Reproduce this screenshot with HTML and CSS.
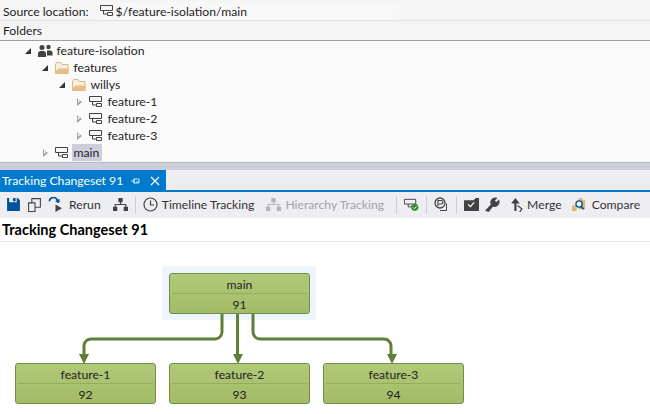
FILE: index.html
```html
<!DOCTYPE html>
<html lang="en">
<head>
    <meta charset="UTF-8">
    <title>Tracking Changeset 91</title>
    <link rel="stylesheet" href="styles.css">
</head>
<body>
    <svg class="defs" width="0" height="0">
        <symbol id="branch" viewBox="0 0 16 14">
            <path d="M1.500 1.500h12v5h-12z M4.500 6.500v3.500h4 M8.500 8.500h5v3h-5z" fill="#f6f6f6" stroke="#424242"/>
        </symbol>
        <symbol id="folder" viewBox="0 0 16 14">
            <path d="M1.500 3.500 2.500 1.500h4.500l1 2h6v9h-12.500z" fill="#f7efe2" stroke="#dcb67a"/>
            <path d="M1.500 12.500 1.500 10.500l3-3h10v5z" fill="#e3c08a"/>
        </symbol>
    </svg>

    <div class="location">
        <span>Source location:</span>
        <span class="location-path"><svg class="ico"><use href="#branch"/></svg>$/feature-isolation/main</span>
    </div>
    <div class="folders">Folders</div>

    <ul class="tree">
        <li class="lvl-1"><i class="tri open"></i>
            <svg class="ico" viewBox="0 0 16 14"><circle cx="5" cy="3.500" r="2.500" fill="#424242"/><circle cx="11.500" cy="3" r="2.200" fill="#424242"/><path d="M1 13V8.500L3 7h4l2 1.500V13z" fill="#424242"/><path d="M10 6.500h4l1.500 1.500v3.500H10z" fill="#424242"/></svg>
            <span>feature-isolation</span></li>
        <li class="lvl-2"><i class="tri open"></i><svg class="ico"><use href="#folder"/></svg><span>features</span></li>
        <li class="lvl-3"><i class="tri open"></i><svg class="ico"><use href="#folder"/></svg><span>willys</span></li>
        <li class="lvl-4"><i class="tri"></i><svg class="ico"><use href="#branch"/></svg><span>feature-1</span></li>
        <li class="lvl-4"><i class="tri"></i><svg class="ico"><use href="#branch"/></svg><span>feature-2</span></li>
        <li class="lvl-4"><i class="tri"></i><svg class="ico"><use href="#branch"/></svg><span>feature-3</span></li>
        <li class="lvl-2"><i class="tri"></i><svg class="ico"><use href="#branch"/></svg><span class="selected">main</span></li>
    </ul>

    <div class="splitter"></div>

    <div class="tabstrip">
        <div class="tab">
            <span class="tab-title">Tracking Changeset 91</span>
            <svg class="pin" viewBox="0 0 10 10"><path d="M0 5h3M3 2.500v5M3 3h5v4H3zM5 6h3" fill="none" stroke="#cfe6f6"/></svg>
            <svg class="close" viewBox="0 0 10 10"><path d="M1 1l8 8M9 1l-8 8" stroke="#fff" stroke-width="1.200"/></svg>
        </div>
    </div>

    <div class="toolbar">
        <svg class="tool" viewBox="0 0 14 14"><path d="M1 1h2v4h7V1h1l2 2v10H1z" fill="#00539c"/><path d="M6.500 1H9v3H6.500z" fill="#00539c"/></svg>
        <svg class="tool" viewBox="0 0 14 14"><path d="M1.500 5.500h6v8h-6z M4.500 5.500v-4h8v8h-5" fill="none" stroke="#424242"/></svg>
        <svg class="tool" viewBox="0 0 14 14"><path d="M1.500 4a3.500 3 0 0 1 7-1l1 2.500" fill="none" stroke="#00539c" stroke-width="1.600"/><path d="M6.500 4.500l4.500.5L10.500 1.500z" fill="#00539c"/><path d="M7 7l6 3.500L7 14z" fill="#424242"/></svg>
        <span class="tool-text rerun">Rerun</span>
        <svg class="tool flush" viewBox="0 0 14 14"><path d="M5 1h4v4H5zM0 9h4v4H0zM10 9h4v4h-4z" fill="#424242"/><path d="M7 4v3H2v3M7 7h5v3" fill="none" stroke="#424242"/></svg>
        <i class="sep"></i>
        <svg class="tool clock" viewBox="0 0 15 15"><circle cx="7.500" cy="7.500" r="6.500" fill="none" stroke="#424242" stroke-width="1.200"/><path d="M7.500 3.500v4.500h3.500" fill="none" stroke="#424242" stroke-width="1.200"/></svg>
        <span class="tool-text timeline">Timeline Tracking</span>
        <svg class="tool hier-off" viewBox="0 0 14 14"><path d="M5 1h4v4H5zM0 9h4v4H0zM10 9h4v4h-4z" fill="#b4b4b4"/><path d="M7 4v3H2v3M7 7h5v3" fill="none" stroke="#b4b4b4"/></svg>
        <span class="tool-text disabled">Hierarchy Tracking</span>
        <i class="sep"></i>
        <svg class="tool flush" viewBox="0 0 16 14"><path d="M.5 1.500h12v5h-12z M4.500 6.500v3h4 " fill="none" stroke="#424242"/><circle cx="11.500" cy="10" r="3.800" fill="#388a34"/><path d="M9.500 10l1.500 1.500 2.500-2.500" fill="none" stroke="#fff"/></svg>
        <i class="sep"></i>
        <svg class="tool flush" viewBox="0 0 15 15"><circle cx="6" cy="6" r="5" fill="none" stroke="#424242" stroke-width="1.300"/><path d="M4 9V3.500h3.500a1.800 1.800 0 0 1 0 3.500H5" fill="none" stroke="#424242" stroke-width="1.200"/><path d="M12.500 6.500v7H6" fill="none" stroke="#424242"/></svg>
        <i class="sep"></i>
        <svg class="tool" viewBox="0 0 14 14"><path d="M0 3h9l2-2h3v12H0z" fill="#424242"/><path d="M4 7l2 2 3.500-4" fill="none" stroke="#fff" stroke-width="1.200"/></svg>
        <svg class="tool wrench" viewBox="0 0 14 14"><path d="M1 12.500l5-5.500a4 4 0 0 1 4-6l.7.200L8.500 3.500l2 2 2.300-2.200a4 4 0 0 1-5.500 5l-4 5z" fill="#424242" stroke="#424242"/></svg>
        <svg class="tool merge" viewBox="0 0 14 14"><path d="M6 1L2 6h3v7h2V6h3z" fill="#424242"/><path d="M8 8l4 3-2 3" fill="none" stroke="#424242" stroke-width="1.200"/></svg>
        <span class="tool-text">Merge</span>
        <svg class="tool compare" viewBox="0 0 16 16"><path d="M0 9h5v6H0z" fill="#dcb67a"/><path d="M7 1h4v2h3v10H7z" fill="#dcb67a"/><circle cx="7.500" cy="7.500" r="3.300" fill="#f3f3f3" stroke="#00539c" stroke-width="1.400"/><path d="M9.500 10l3 3" stroke="#00539c" stroke-width="1.800"/></svg>
        <span class="tool-text">Compare</span>
    </div>

    <h1 class="heading">Tracking Changeset 91</h1>

    <div class="graph">
        <div class="highlight"></div>
        <svg class="links" width="650" height="172" viewBox="0 0 650 172">
            <g fill="none" stroke="#5f8039" stroke-width="3">
                <path d="M222 71v19a7 7 0 0 1-7 7H91a7 7 0 0 0-7 7v10"/>
                <path d="M237.500 71v43"/>
                <path d="M253 71v19a7 7 0 0 0 7 7h124a7 7 0 0 1 7 7v10"/>
            </g>
            <g fill="#5f8039">
                <path d="M79 112h10l-5 10z"/>
                <path d="M233 112h10l-5 10z"/>
                <path d="M387 112h10l-5 10z"/>
            </g>
        </svg>
        <div class="node node-main"><div class="node-name">main</div><div class="node-id">91</div></div>
        <div class="node node-f1"><div class="node-name">feature-1</div><div class="node-id">92</div></div>
        <div class="node node-f2"><div class="node-name">feature-2</div><div class="node-id">93</div></div>
        <div class="node node-f3"><div class="node-name">feature-3</div><div class="node-id">94</div></div>
    </div>
</body>
</html>
```

FILE: styles.css
```css
html, body {
    margin: 0;
    height: 414px;
    overflow: hidden;
}
body {
    width: 650px;
    background-color: #fff;
    color: #1e1e1e;
    font-family: "Lato", "Open Sans", sans-serif;
    font-size: 12.2px;
}
.defs {
    position: absolute;
}
.ico {
    width: 16px;
    height: 14px;
    flex: none;
}
.location {
    display: flex;
    align-items: center;
    height: 20px;
    padding: 2px 0 0 3px;
    background-color: #f5f5f5;
    box-sizing: border-box;
}
.location-path {
    display: flex;
    align-items: center;
    gap: 1px;
    margin-left: 8px;
    padding-left: 2px;
    height: 18px;
    width: 300px;
    background-color: #f8f8f8;
}
.folders {
    height: 21px;
    line-height: 19px;
    padding-left: 3px;
    background-color: #f5f5f5;
    border-top: 1px solid #e0e0e0;
    border-bottom: 1px solid #a0a0a0;
    box-sizing: border-box;
}
.tree {
    list-style: none;
    margin: 0;
    padding: 1px 0 0;
    height: 121px;
    box-sizing: border-box;
    background-color: #fafafa;
}
.tree li {
    display: flex;
    align-items: center;
    height: 17px;
}
.tree li .ico {
    margin-right: 3.500px;
}
.lvl-1 { padding-left: 24px; }
.lvl-2 { padding-left: 41px; }
.lvl-3 { padding-left: 58px; }
.lvl-4 { padding-left: 75px; }
.tri {
    flex: none;
    width: 12px;
    height: 10px;
    margin-right: 1px;
    position: relative;
}
.tri::before {
    content: "";
    position: absolute;
    left: 2px;
    top: 1px;
    border-left: 5px solid #a0a0a0;
    border-top: 4px solid transparent;
    border-bottom: 4px solid transparent;
}
.tri::after {
    content: "";
    position: absolute;
    left: 3px;
    top: 2.500px;
    border-left: 2.500px solid #fafafa;
    border-top: 2.500px solid transparent;
    border-bottom: 2.500px solid transparent;
}
.tri.open::before {
    left: 1px;
    top: 2px;
    border: 0;
    border-right: 6px solid #333;
    border-top: 6px solid transparent;
}
.tri.open::after {
    display: none;
}
.selected {
    background-color: #ccceDB;
    padding: 0 3px 0 2px;
    margin-left: -2px;
    line-height: 17px;
}
.splitter {
    height: 7px;
    margin-top: 1px;
    background-color: #ccceDb;
    box-shadow: 0 -1px 1px #bbb;
}
.tabstrip {
    height: 20px;
    background-color: #eeeef2;
}
.tab {
    display: flex;
    align-items: center;
    width: 166px;
    height: 20px;
    padding: 1px 0 0 2px;
    box-sizing: border-box;
    background-color: #007acc;
    color: #fff;
    white-space: nowrap;
}
.tab-title {
    width: 118px;
}
.pin {
    width: 10px;
    height: 10px;
    margin-left: 11px;
}
.close {
    width: 10px;
    height: 10px;
    margin-left: 9px;
}
.toolbar {
    display: flex;
    align-items: center;
    height: 28px;
    padding: 0 0 1px 6px;
    box-sizing: border-box;
    background-color: #eeeef2;
    border-top: 2px solid #007acc;
    color: #333;
    white-space: nowrap;
}
.tool {
    flex: none;
    width: 15px;
    height: 15px;
    margin-right: 6px;
}
.flush {
    margin-right: 0;
}
.tool-text {
    margin-right: 8px;
}
.rerun {
    margin-right: 12px;
}
.clock {
    margin-right: 4px;
}
.timeline {
    margin-right: 12px;
}
.hier-off {
    margin-right: 4px;
}
.disabled {
    color: #a2a4a5;
    margin-right: 5px;
}
.sep {
    flex: none;
    width: 1px;
    height: 18px;
    margin: 0 7px;
    background-color: #ccceDb;
}
.wrench {
    margin-right: 9px;
}
.merge {
    margin-right: 3px;
}
.compare {
    margin-left: 2px;
    margin-right: 5px;
}
.heading {
    margin: 0;
    height: 24px;
    line-height: 23px;
    padding-left: 2px;
    font-size: 14.500px;
    font-weight: 700;
    color: #000;
    border-bottom: 1px solid #e8e8e8;
    box-sizing: border-box;
}
.graph {
    position: relative;
    height: 172px;
}
.highlight {
    position: absolute;
    left: 162px;
    top: 24px;
    width: 154px;
    height: 54px;
    background-color: #edf4fb;
    border-radius: 3px;
}
.links {
    position: absolute;
    left: 0;
    top: 0;
}
.node {
    position: absolute;
    width: 141px;
    height: 41px;
    box-sizing: border-box;
    text-align: center;
    color: #222;
    background: linear-gradient(#b1c978, #a4bb66);
    border: 1px solid #6d8f4a;
    border-radius: 3px;
}
.node-name {
    height: 18px;
    line-height: 20px;
    padding-top: 1px;
    margin: 0 2px;
    border-bottom: 1px solid #94ad5f;
}
.node-id {
    line-height: 21px;
}
.node-main { left: 169px; top: 31px; }
.node-f1 { left: 15px; top: 121px; }
.node-f2 { left: 169px; top: 121px; }
.node-f3 { left: 323px; top: 121px; }
```
